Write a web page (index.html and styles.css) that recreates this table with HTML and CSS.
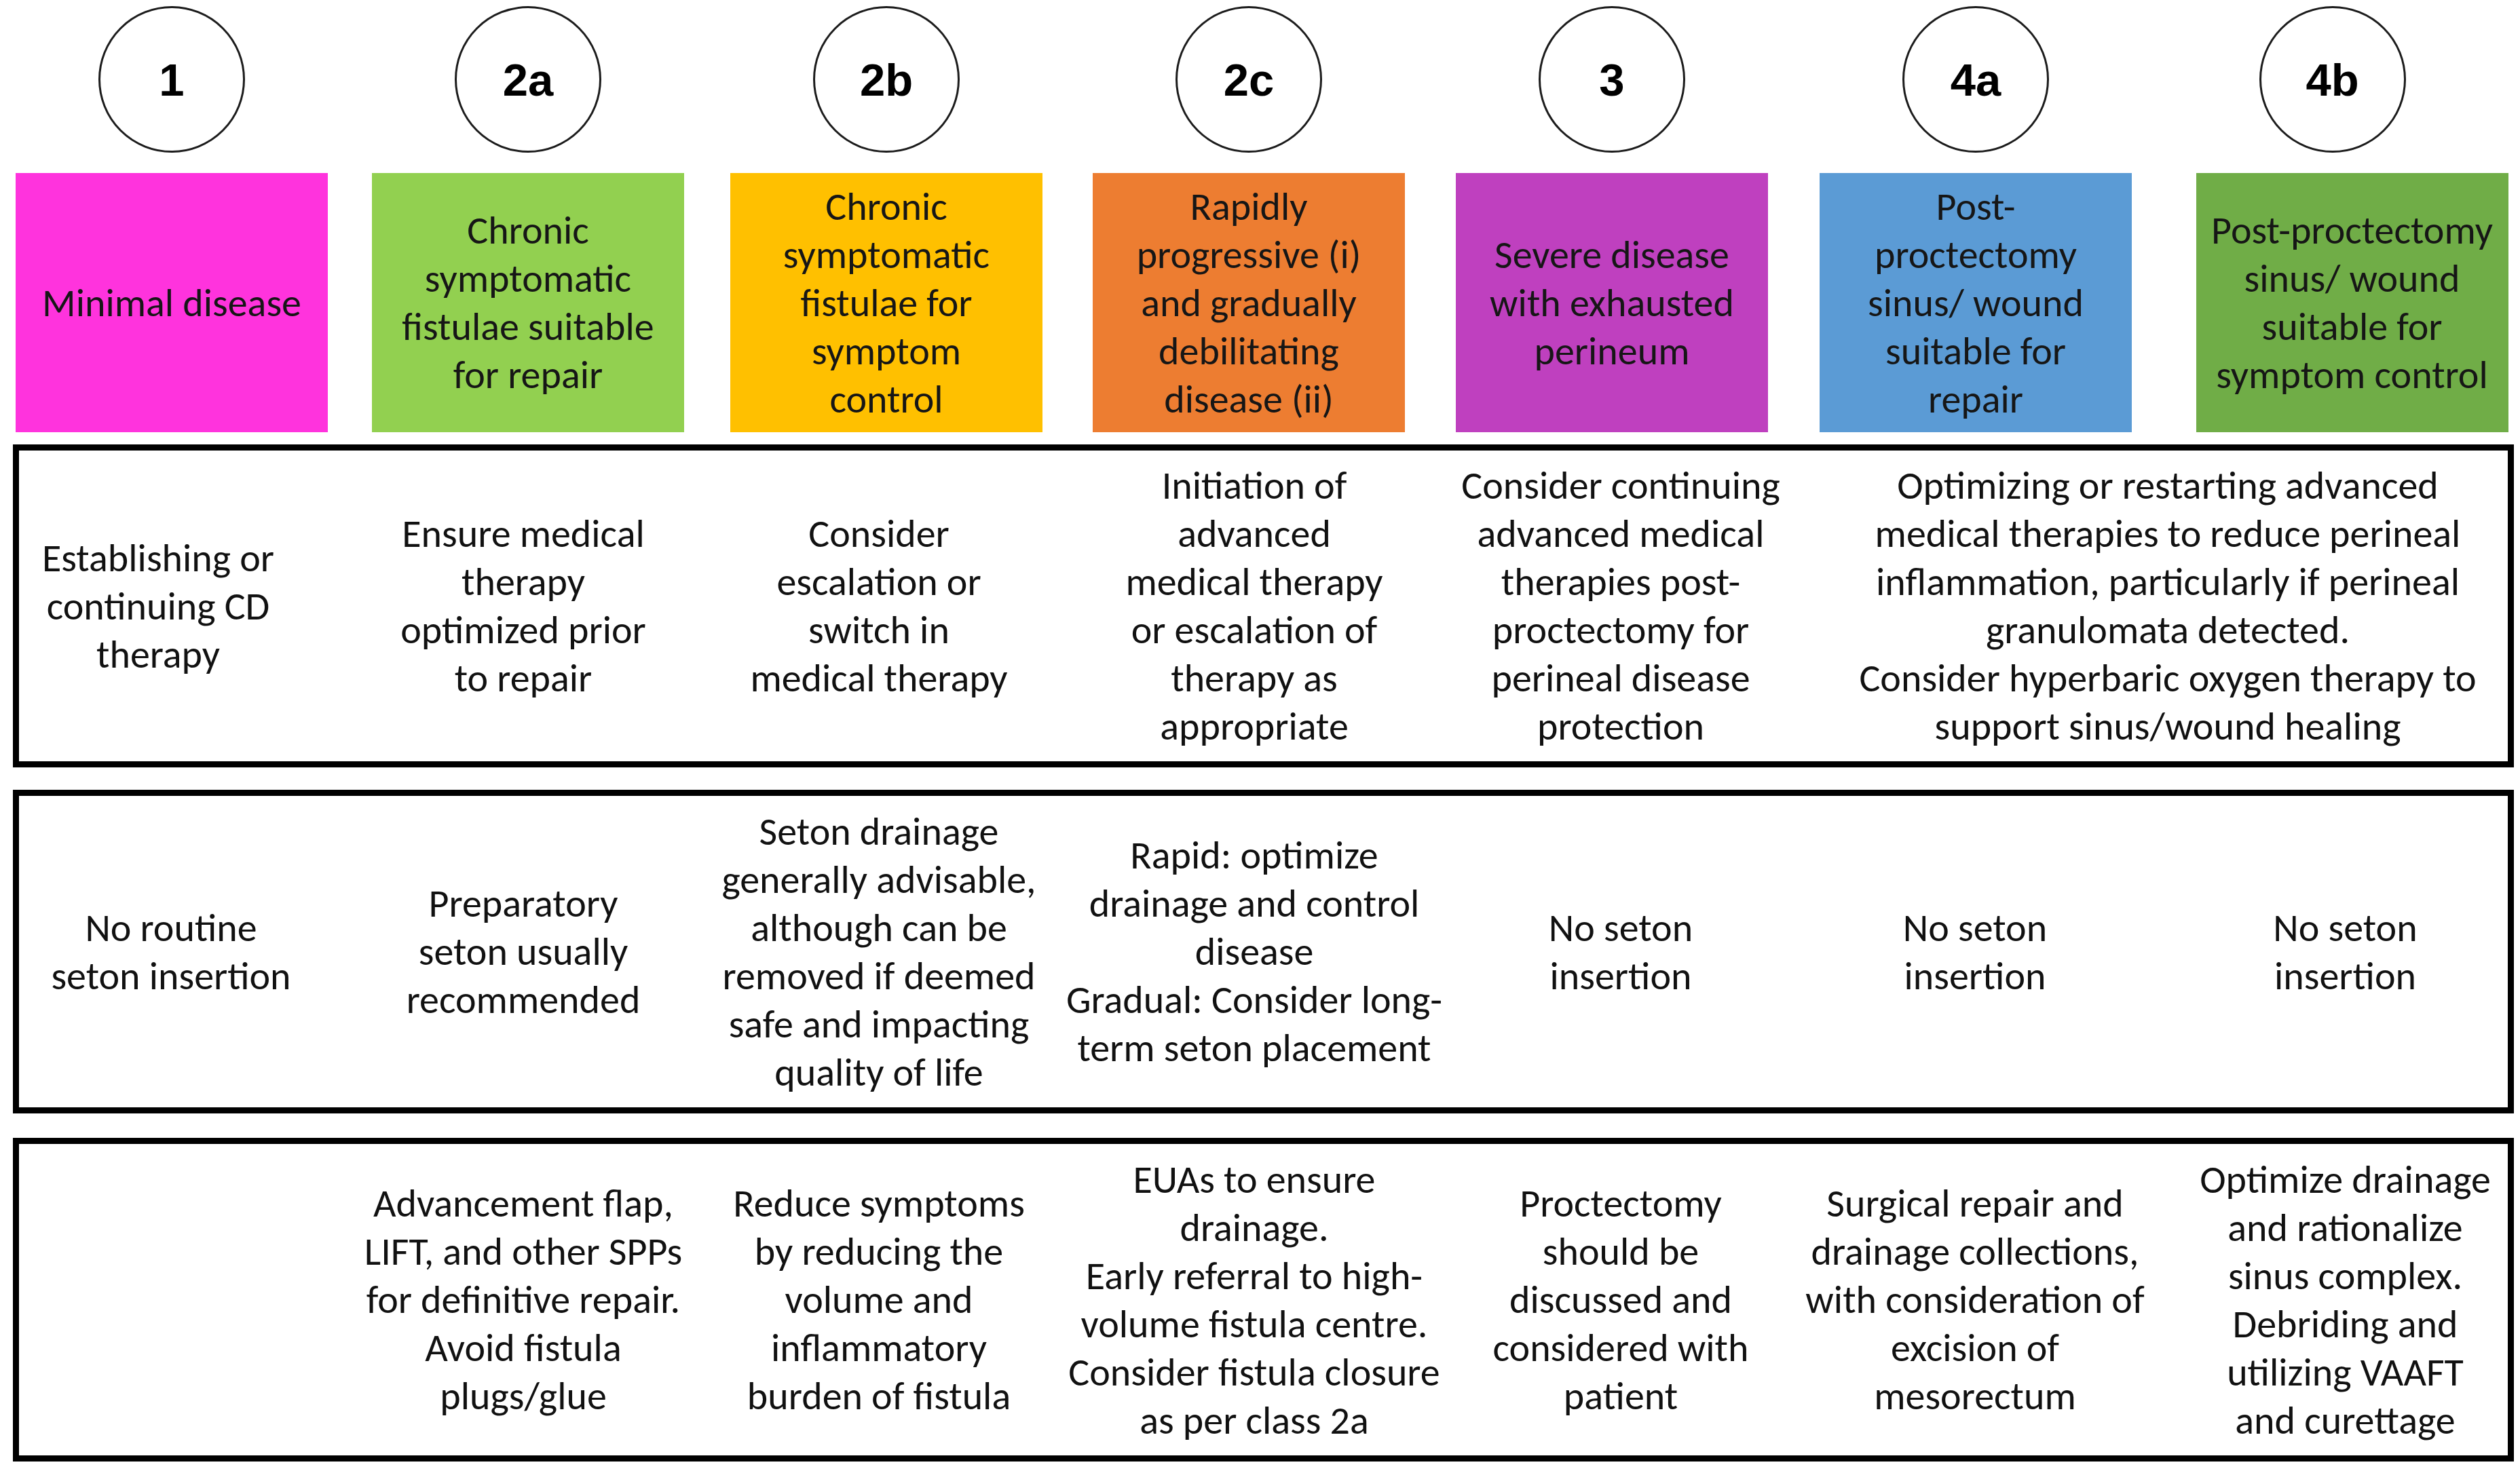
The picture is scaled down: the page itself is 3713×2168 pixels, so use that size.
FILE: index.html
```html
<!DOCTYPE html>
<html lang="en">
<head>
<meta charset="utf-8">
<title>Perianal fistulizing Crohn's disease classification</title>
<link rel="stylesheet" href="styles.css">
</head>
<body>
<div class="page">
  <div class="heads">
    <div class="col">
      <div class="circle">1</div>
      <div class="tag magenta">Minimal disease</div>
    </div>
    <div class="col">
      <div class="circle">2a</div>
      <div class="tag lime">Chronic<br>symptomatic<br>fistulae suitable<br>for repair</div>
    </div>
    <div class="col">
      <div class="circle">2b</div>
      <div class="tag amber">Chronic<br>symptomatic<br>fistulae for<br>symptom<br>control</div>
    </div>
    <div class="col">
      <div class="circle">2c</div>
      <div class="tag orange">Rapidly<br>progressive (i)<br>and gradually<br>debilitating<br>disease (ii)</div>
    </div>
    <div class="col">
      <div class="circle">3</div>
      <div class="tag purple">Severe disease<br>with exhausted<br>perineum</div>
    </div>
    <div class="col">
      <div class="circle">4a</div>
      <div class="tag blue">Post-<br>proctectomy<br>sinus/ wound<br>suitable for<br>repair</div>
    </div>
    <div class="col">
      <div class="circle nudge-left">4b</div>
      <div class="tag green nudge-right">Post-proctectomy<br>sinus/ wound<br>suitable for<br>symptom control</div>
    </div>
  </div>

  <div class="panel">
    <div class="cells">
      <div class="cell pull-left">Establishing or<br>continuing CD<br>therapy</div>
      <div class="cell">Ensure medical<br>therapy<br>optimized prior<br>to repair</div>
      <div class="cell">Consider<br>escalation or<br>switch in<br>medical therapy</div>
      <div class="cell">Initiation of<br>advanced<br>medical therapy<br>or escalation of<br>therapy as<br>appropriate</div>
      <div class="cell">Consider continuing<br>advanced medical<br>therapies post-<br>proctectomy for<br>perineal disease<br>protection</div>
      <div class="cell wide">Optimizing or restarting advanced<br>medical therapies to reduce perineal<br>inflammation, particularly if perineal<br>granulomata detected.<br>Consider hyperbaric oxygen therapy to<br>support sinus/wound healing</div>
    </div>
  </div>

  <div class="panel second">
    <div class="cells">
      <div class="cell">No routine<br>seton insertion</div>
      <div class="cell">Preparatory<br>seton usually<br>recommended</div>
      <div class="cell">Seton drainage<br>generally advisable,<br>although can be<br>removed if deemed<br>safe and impacting<br>quality of life</div>
      <div class="cell">Rapid: optimize<br>drainage and control<br>disease<br>Gradual: Consider long-<br>term seton placement</div>
      <div class="cell">No seton<br>insertion</div>
      <div class="cell">No seton<br>insertion</div>
      <div class="cell">No seton<br>insertion</div>
    </div>
  </div>

  <div class="panel third">
    <div class="cells">
      <div class="cell"></div>
      <div class="cell">Advancement flap,<br>LIFT, and other SPPs<br>for definitive repair.<br>Avoid fistula<br>plugs/glue</div>
      <div class="cell">Reduce symptoms<br>by reducing the<br>volume and<br>inflammatory<br>burden of fistula</div>
      <div class="cell">EUAs to ensure<br>drainage.<br>Early referral to high-<br>volume fistula centre.<br>Consider fistula closure<br>as per class 2a</div>
      <div class="cell">Proctectomy<br>should be<br>discussed and<br>considered with<br>patient</div>
      <div class="cell">Surgical repair and<br>drainage collections,<br>with consideration of<br>excision of<br>mesorectum</div>
      <div class="cell">Optimize drainage<br>and rationalize<br>sinus complex.<br>Debriding and<br>utilizing VAAFT<br>and curettage</div>
    </div>
  </div>
</div>
</body>
</html>
```

FILE: styles.css
```css
html, body {
  margin: 0;
  padding: 0;
  background: #ffffff;
}

body {
  font-family: Carlito, Calibri, "Liberation Sans Narrow", Lato, sans-serif;
  color: #111111;
}

.page {
  width: 3713px;
  height: 2168px;
  padding-top: 9px;
  box-sizing: border-box;
  overflow: hidden;
}

.heads {
  display: grid;
  grid-template-columns: 506px 544px 512px 556px 514px 558px 523px;
}

.col {
  display: flex;
  flex-direction: column;
  align-items: center;
}

.circle {
  width: 216px;
  height: 216px;
  box-sizing: border-box;
  border: 3px solid #1c1c1c;
  border-radius: 50%;
  background: #ffffff;
  display: flex;
  align-items: center;
  justify-content: center;
  font-family: "Liberation Sans", Arial, sans-serif;
  font-weight: bold;
  font-size: 67px;
  color: #000000;
}

.circle.nudge-left {
  margin-right: 30px;
}

.tag {
  margin-top: 30px;
  width: 460px;
  height: 382px;
  display: flex;
  align-items: center;
  justify-content: center;
  text-align: center;
  font-size: 58px;
  line-height: 71px;
  white-space: nowrap;
  color: #161616;
}

.tag.nudge-right {
  margin-left: 28px;
}

.magenta { background: #ff33dd; }
.lime { background: #92d050; }
.amber { background: #ffc000; }
.orange { background: #ed7d31; }
.purple { background: #bf40bf; }
.blue { background: #5b9bd5; }
.green { background: #70ad47; }

.panel {
  margin: 18px 0 0 19px;
  width: 3685px;
  height: 476px;
  box-sizing: border-box;
  border: 9px solid #000000;
}

.panel.second {
  margin-top: 33px;
  height: 477px;
}

.panel.third {
  margin-top: 36px;
  height: 477px;
}

.cells {
  display: grid;
  height: 100%;
  grid-template-columns: 448px 590px 458px 648px 432px 612px 1fr;
}

.cell {
  display: flex;
  align-items: center;
  justify-content: center;
  text-align: center;
  font-size: 58px;
  line-height: 71px;
  white-space: nowrap;
  color: #111111;
}

.cell.pull-left {
  padding-right: 38px;
}

.cell.wide {
  grid-column: span 2;
  padding-left: 89px;
}
```
